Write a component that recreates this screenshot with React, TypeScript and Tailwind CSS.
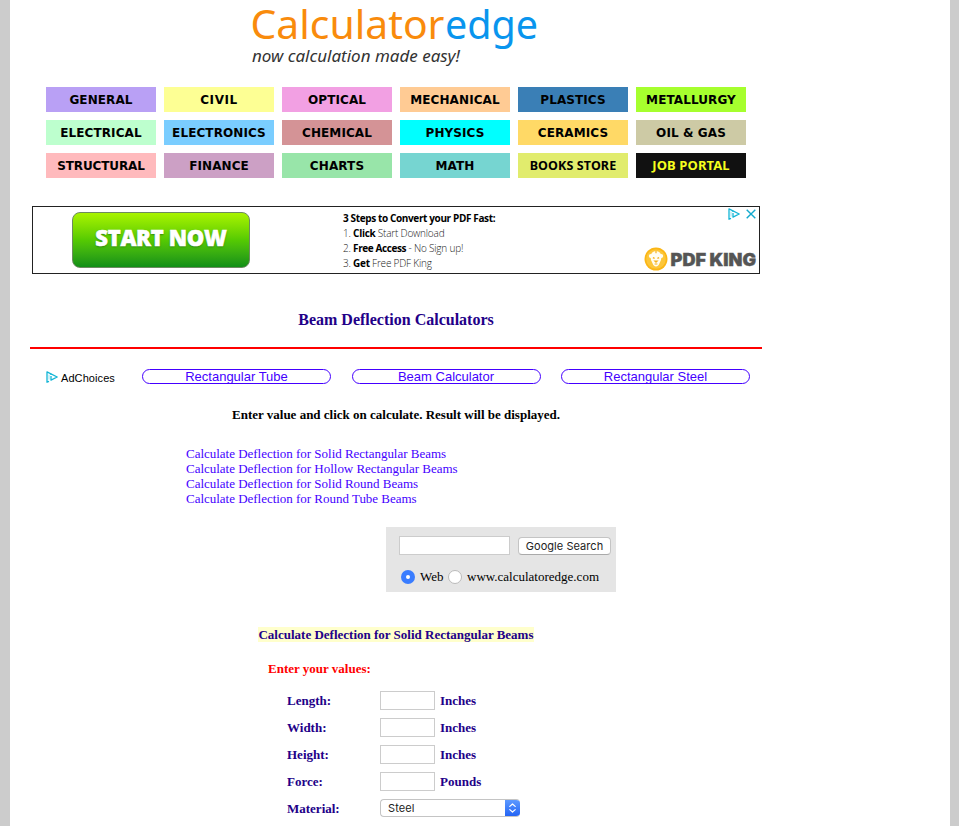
import type { ReactNode } from "react";

const serif = "font-['Liberation_Serif',Times,serif]";
const sans = "font-['Liberation_Sans',Arial,sans-serif]";

const categories = [
  { label: "GENERAL", style: "bg-[#b9a0f5] text-black" },
  { label: "CIVIL", style: "bg-[#fdff94] text-black tracking-[0.6px]" },
  { label: "OPTICAL", style: "bg-[#f2a0e3] text-black" },
  { label: "MECHANICAL", style: "bg-[#ffcb94] text-black" },
  { label: "PLASTICS", style: "bg-[#3a7fb6] text-black" },
  { label: "METALLURGY", style: "bg-[#a6ff2e] text-black" },
  { label: "ELECTRICAL", style: "bg-[#bdffce] text-black" },
  { label: "ELECTRONICS", style: "bg-[#7acdff] text-black" },
  { label: "CHEMICAL", style: "bg-[#d49396] text-black" },
  { label: "PHYSICS", style: "bg-[#00ffff] text-black" },
  { label: "CERAMICS", style: "bg-[#ffd966] text-black" },
  { label: "OIL & GAS", style: "bg-[#cdcaa5] text-black" },
  { label: "STRUCTURAL", style: "bg-[#ffbabd] text-black tracking-[-0.1px]" },
  { label: "FINANCE", style: "bg-[#cca0c5] text-black" },
  { label: "CHARTS", style: "bg-[#98e5a9] text-black" },
  { label: "MATH", style: "bg-[#76d5d1] text-black" },
  { label: "BOOKS STORE", style: "bg-[#e1ec6d] text-black font-['Noto_Sans',sans-serif] text-[12.5px] pt-px" },
  { label: "JOB PORTAL", style: "bg-[#111111] text-[#f5ff1e] font-['Noto_Sans',sans-serif] text-[13px]" },
];

const links = [
  "Calculate Deflection for Solid Rectangular Beams",
  "Calculate Deflection for Hollow Rectangular Beams",
  "Calculate Deflection for Solid Round Beams",
  "Calculate Deflection for Round Tube Beams",
];

const fields = [
  { label: "Length:", unit: "Inches" },
  { label: "Width:", unit: "Inches" },
  { label: "Height:", unit: "Inches" },
  { label: "Force:", unit: "Pounds" },
];

function AdIcon() {
  return (
    <svg width="12" height="12" viewBox="0 0 12 12" fill="none" stroke="#12b5d6" strokeWidth="1.3" strokeLinejoin="round">
      <path d="M3 10.3 L1 11.2 V0.8 L11.2 6 L5 9.1 V5" />
      <path d="M5 2.8 v1.2" />
      <path d="M3 3.6 v5" strokeWidth="0.8" opacity=".5" />
    </svg>
  );
}

function Logo() {
  return (
    <svg width="300" height="72" className="ml-[232px] block overflow-visible">
      <text x="8.5" y="39" fontFamily="'Noto Sans'" fontSize="40" fill="#f98b0c" textLength="194" lengthAdjust="spacingAndGlyphs">Calculator</text>
      <text x="203" y="39" fontFamily="'Noto Sans'" fontSize="40" fill="#0995ee" textLength="93" lengthAdjust="spacingAndGlyphs">edge</text>
      <text x="10" y="62" fontFamily="'Noto Sans'" fontStyle="italic" fontSize="15.5" fill="#333" textLength="208" lengthAdjust="spacingAndGlyphs">now calculation made easy!</text>
    </svg>
  );
}

function Lion() {
  return (
    <svg width="24" height="24" viewBox="0 0 24 24">
      <circle cx="12" cy="12" r="11.5" fill="#fbb615" />
      <circle cx="12" cy="12" r="9.8" fill="#fcc63a" />
      <circle cx="6.8" cy="9" r="2" fill="#fffdf2" />
      <circle cx="17.2" cy="9" r="2" fill="#fffdf2" />
      <path d="M12 4 Q17 4.3 17.4 9.5 Q17.6 13 15.6 16 Q14.5 19.4 12 19.4 Q9.5 19.4 8.4 16 Q6.4 13 6.6 9.5 Q7 4.3 12 4 Z" fill="#fffdf2" />
      <path d="M12 4 v2.2 M8.9 10.6 l1.7 .8 M15.1 10.6 l-1.7 .8 M10.8 14 h2.4 L12 15.2 Z M10.6 17 h2.8" fill="none" stroke="#f5b11b" strokeWidth="1.2" />
    </svg>
  );
}

function Advert() {
  return (
    <div className="ml-[22px] mt-7 flex h-[68px] w-[728px] border border-[#222] bg-white font-['Open_Sans',sans-serif]">
      <div className="ml-[39px] mt-[5px] flex h-[56px] w-[178px] justify-center rounded-[8px] border border-[#6d8a60] bg-gradient-to-b from-[#a8f400] via-[#55ca02] to-[#0f9016]">
        <span className="mt-[8px] whitespace-nowrap text-[22px] font-extrabold leading-[32px] tracking-[-0.3px] text-white [-webkit-text-stroke:0.6px_white] [text-shadow:0_1px_2px_#267b0e]">START NOW</span>
      </div>
      <div className="ml-[93px] mt-[3px] w-[200px] whitespace-nowrap pt-px text-[10px] font-light leading-[15px] tracking-[-0.2px] text-[#222]">
        <div className="font-bold tracking-[-0.37px] text-black">3 Steps to Convert your PDF Fast:</div>
        <div>1. <span className="font-bold tracking-[-0.3px] text-black">Click</span> Start Download</div>
        <div>2. <span className="font-bold tracking-[-0.4px] text-black">Free Access</span> - No Sign up!</div>
        <div>3. <span className="font-bold tracking-[-0.3px] text-black">Get</span> Free PDF King</div>
      </div>
      <div className="ml-auto flex w-[115px] flex-col">
        <div className="mr-[3px] mt-px flex justify-end gap-[6px]">
          <AdIcon />
          <svg width="10" height="12" viewBox="0 0 10 12" stroke="#12a9ce" strokeWidth="1.4"><path d="M.7 1.7 L9.3 10.3 M9.3 1.7 L.7 10.3" /></svg>
        </div>
        <div className="mt-[27px] flex items-center">
          <Lion />
          <svg width="89" height="20" className="ml-[2px] overflow-visible">
            <text x="0.6" y="16.6" fontFamily="Inter" fontWeight="900" fontSize="17" fill="#555" stroke="#555" strokeWidth=".4" textLength="85.5" lengthAdjust="spacingAndGlyphs">PDF KING</text>
          </svg>
        </div>
      </div>
    </div>
  );
}

function Pill({ children }: { children: ReactNode }) {
  return (
    <a className={`flex h-[15px] w-[189px] items-center justify-center rounded-full border border-[#4400ff] text-[13px] leading-[15px] text-[#4400ff] ${sans}`}>
      {children}
    </a>
  );
}

export default function App() {
  return (
    <div className={`h-[826px] overflow-hidden bg-[#cccccc] pl-[10px] text-[13px] text-black ${serif}`}>
      <main className="h-[826px] w-[940px] bg-white">
        <header className="h-[87px]"><Logo /></header>

        <nav className="ml-9 grid w-[700px] grid-cols-6 gap-2 font-['DejaVu_Sans',Verdana,sans-serif] text-[12px] font-bold tracking-[0.1px]">
          {categories.map((c) => (
            <a key={c.label} className={`flex h-[25px] items-center justify-center whitespace-nowrap ${c.style}`}>{c.label}</a>
          ))}
        </nav>

        <Advert />

        <h1 className="ml-5 mt-[36px] w-[732px] text-center text-[16px] font-bold leading-[20px] text-[#220088]">Beam Deflection Calculators</h1>
        <hr className="ml-5 mt-[17px] w-[732px] border-0 border-t-2 border-[#ff0000]" />

        <div className="ml-[36px] mt-[20px] flex h-[16px] w-[704px]">
          <div className={`flex w-[96px] items-center gap-[3px] text-[11px] tracking-[0.08px] ${sans}`}><AdIcon /><span className="pt-[2px]">AdChoices</span></div>
          <div className="flex w-[608px] justify-between">
            <Pill>Rectangular Tube</Pill>
            <Pill>Beam Calculator</Pill>
            <Pill>Rectangular Steel</Pill>
          </div>
        </div>

        <p className="ml-5 mt-[22px] w-[732px] text-center font-bold leading-[15px]">Enter value and click on calculate. Result will be displayed.</p>

        <ul className="ml-[176px] mt-[24px] leading-[15px] tracking-[-0.02px] text-[#4400ff]">
          {links.map((link) => <li key={link}><a>{link}</a></li>)}
        </ul>

        <section className="ml-[376px] mt-[21px] h-[65px] w-[230px] bg-[#e5e5e5] pl-[13px] pt-[9px]">
          <div className="flex items-center gap-2">
            <input className="h-[19px] w-[111px] border border-[#ccc] bg-white" />
            <button className="mt-px h-[18px] w-[93px] whitespace-nowrap rounded-[4px] border border-[#c4c4c4] border-b-[#aaa] bg-white font-['Inter',sans-serif] text-[11px] leading-[16px] tracking-[0.05px] text-[#222]">Google Search</button>
          </div>
          <div className="ml-[2px] mt-[14px] flex h-[16px] items-center">
            <span className="flex size-[14px] items-center justify-center rounded-full bg-[#3a7dff]"><span className="size-1 rounded-full bg-white" /></span>
            <span className="ml-[5px] w-[28px]">Web</span>
            <span className="size-[14px] rounded-full border border-[#bbb] bg-white" />
            <span className="ml-[5px]">www.calculatoredge.com</span>
          </div>
        </section>

        <h2 className="ml-5 mt-[35px] w-[732px] text-center font-bold leading-[15px] text-[#220088]"><span className="bg-[#ffffcc]">Calculate Deflection for Solid Rectangular Beams</span></h2>
        <p className="ml-[258px] mt-[19px] font-bold leading-[15px] text-[#ff0000]">Enter your values:</p>

        <form className="ml-[277px] mt-[15px] flex flex-col gap-2 font-bold text-[#220088]">
          {fields.map((f) => (
            <label key={f.label} className="flex h-[19px] items-center leading-[15px]">
              <span className="w-[93px]">{f.label}</span>
              <input className="h-[19px] w-[55px] border border-[#ccc] bg-white" />
              <span className="ml-[5px]">{f.unit}</span>
            </label>
          ))}
          <div className="flex h-[19px] items-center leading-[15px]">
            <span className="w-[93px]">Material:</span>
            <div className="-mt-px flex h-[18px] w-[140px] overflow-hidden rounded-[4px] border border-r-0 border-[#c4c4c4] bg-white font-['Inter',sans-serif] text-[11px] font-normal leading-[16px] text-[#222]">
              <span className="flex-1 pl-[7px] tracking-[0.1px]">Steel</span>
              <span className="-my-px flex h-[18px] w-[15px] items-center justify-center bg-gradient-to-b from-[#609cff] to-[#2160f4]">
                <svg width="7" height="10" viewBox="0 0 7 10" fill="none" stroke="white" strokeWidth="1.2" strokeLinecap="round" strokeLinejoin="round"><path d="M.8 3.4 L3.5 1 L6.2 3.4 M.8 6.6 L3.5 9 L6.2 6.6" /></svg>
              </span>
            </div>
          </div>
        </form>
      </main>
    </div>
  );
}
